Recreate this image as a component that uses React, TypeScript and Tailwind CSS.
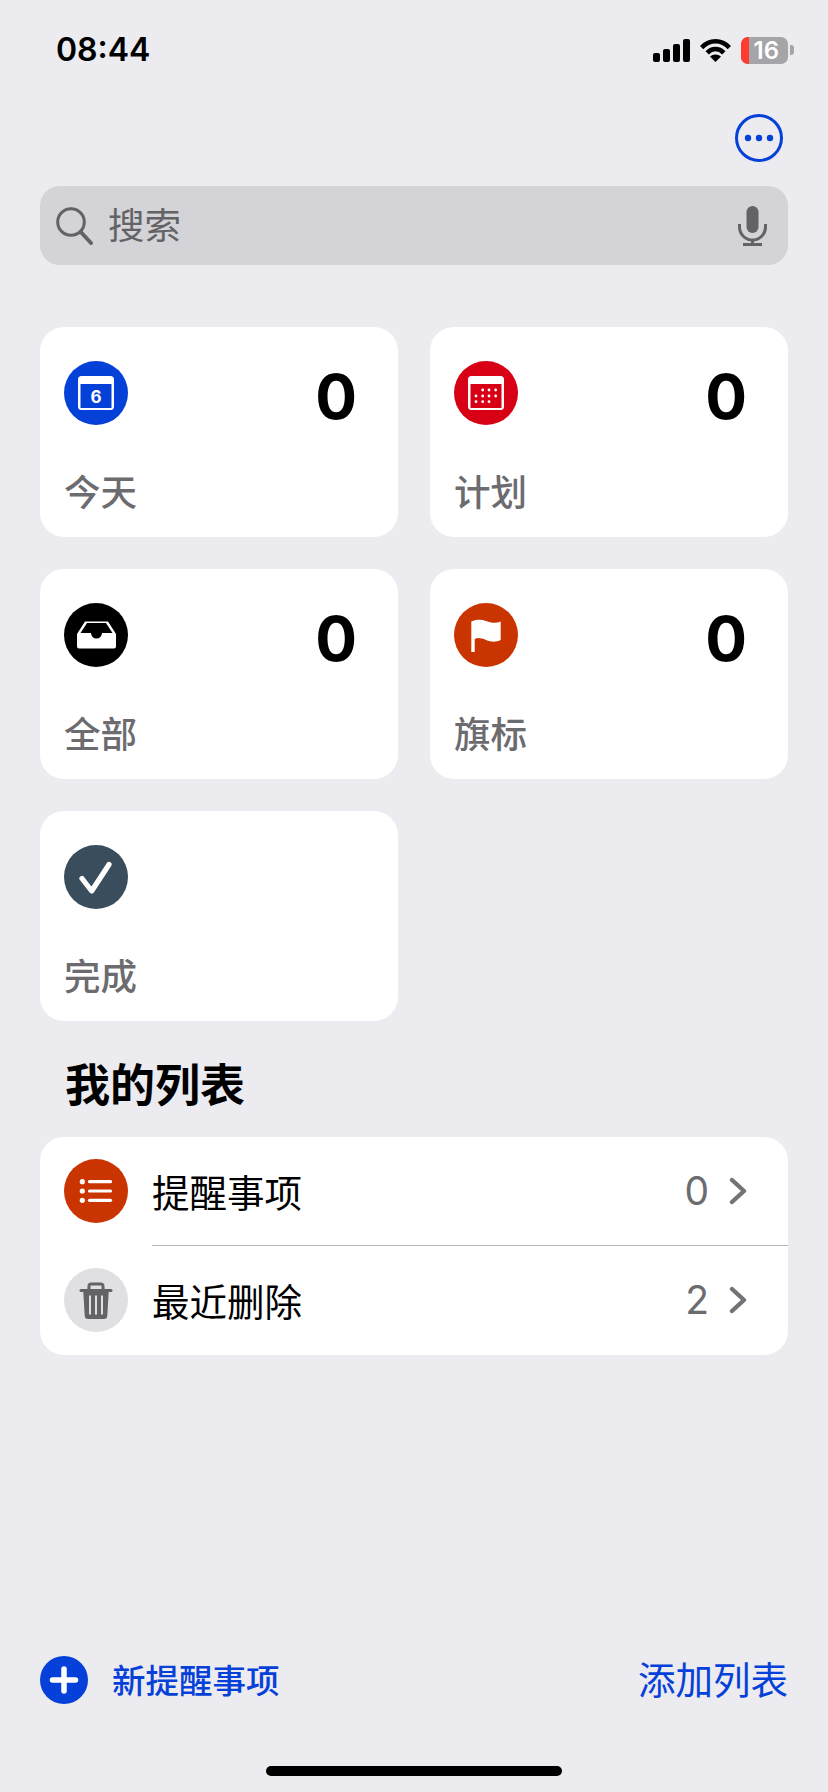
const cjk = "font-['Noto_Sans_CJK_SC','Noto_Sans',sans-serif]";

function StatusIcons() {
  return (
    <div className="flex items-center">
      {/* signal */}
      <svg width="37" height="23" viewBox="0 0 37 23" fill="#000">
        <rect x="0" y="14" width="7" height="9" rx="2" />
        <rect x="10" y="10" width="7" height="13" rx="2" />
        <rect x="20" y="5" width="7" height="18" rx="2" />
        <rect x="30" y="0" width="7" height="23" rx="2" />
      </svg>
      {/* wifi */}
      <svg className="ml-[10px]" width="31" height="24" viewBox="0 0 31 24" fill="none" stroke="#000" strokeWidth="4.6">
        <path d="M1.6 9.6C9.4 1.2 21.6 1.2 29.4 9.6" />
        <path d="M7.2 14.8C12 9.8 19 9.8 23.8 14.8" />
        <path d="M15.5 24L10 18.6C13 15.8 18 15.8 21 18.6Z" fill="#000" stroke="none" />
      </svg>
      {/* battery */}
      <div className="ml-[10px] flex items-center">
        <div className="relative w-[47px] h-[27px] rounded-[7px] bg-[#a5a5a9] flex items-center justify-end pr-[9px]">
          <div className="absolute left-0 top-0 bottom-0 w-[8px] rounded-l-[7px] bg-[#ff3b30]" />
          <span className="font-['Inter',sans-serif] font-semibold text-[24px] leading-[27px] text-white">16</span>
        </div>
        <div className="w-[4px] h-[10px] ml-[2px] rounded-r-[3px] bg-[#a5a5a9]" />
      </div>
    </div>
  );
}

function TodayIcon() {
  return (
    <svg width="64" height="64" viewBox="0 0 64 64">
      <circle cx="32" cy="32" r="32" fill="#0540d8" />
      <path fillRule="evenodd" fill="#fff" d="M17.5 15h29a3.5 3.5 0 0 1 3.5 3.5v27a3.5 3.5 0 0 1-3.5 3.5h-29a3.5 3.5 0 0 1-3.5-3.5v-27a3.5 3.5 0 0 1 3.5-3.5zM16.5 23v24h31v-24z" />
      <text x="32" y="41.5" textAnchor="middle" fontSize="17" fontWeight="700" fill="#fff" fontFamily="Inter, sans-serif">6</text>
    </svg>
  );
}

function ScheduledIcon() {
  const dots = [
    [28.7, 29], [35, 29], [41.7, 29],
    [22, 35], [28.7, 35], [35, 35], [41.7, 35],
    [22, 40.7], [28.7, 40.7], [35, 40.7],
  ];
  return (
    <svg width="64" height="64" viewBox="0 0 64 64">
      <circle cx="32" cy="32" r="32" fill="#d70015" />
      <path fillRule="evenodd" fill="#fff" d="M17.5 15h29a3.5 3.5 0 0 1 3.5 3.5v27a3.5 3.5 0 0 1-3.5 3.5h-29a3.5 3.5 0 0 1-3.5-3.5v-27a3.5 3.5 0 0 1 3.5-3.5zM16.5 23v24h31v-24z" />
      {dots.map(([x, y]) => (
        <circle key={`${x}-${y}`} cx={x} cy={y} r="1.4" fill="#fff" />
      ))}
    </svg>
  );
}

function AllIcon() {
  return (
    <svg width="64" height="64" viewBox="0 0 64 64">
      <circle cx="32" cy="32" r="32" fill="#000" />
      <path fillRule="evenodd" fill="#fff" d="M13 31L21 18.5H44L52 31V43.5a2 2 0 0 1-2 2H15a2 2 0 0 1-2-2ZM16.5 30L23 20H42L48.5 30H38a5.5 5.5 0 0 1-11 0Z" />
    </svg>
  );
}

function FlagIcon() {
  return (
    <svg width="64" height="64" viewBox="0 0 64 64">
      <circle cx="32" cy="32" r="32" fill="#c93400" />
      <path fill="#fff" d="M17.3 18.5C22 16.2 27 16 32 18S42 20.6 46.7 18.5V37C42 39.4 37 39 32 37S24 34.4 20.7 36V49H17.3Z" />
    </svg>
  );
}

function DoneIcon() {
  return (
    <svg width="64" height="64" viewBox="0 0 64 64">
      <circle cx="32" cy="32" r="32" fill="#3a4d5c" />
      <path d="M18 33.5L27.7 46L45 19.5" fill="none" stroke="#fff" strokeWidth="5.2" strokeLinecap="round" strokeLinejoin="round" />
    </svg>
  );
}

function ListIcon() {
  return (
    <svg width="64" height="64" viewBox="0 0 64 64">
      <circle cx="32" cy="32" r="32" fill="#c93400" />
      {[22.7, 32, 41.3].map((y) => (
        <g key={y}>
          <circle cx="18.3" cy={y} r="2.6" fill="#fff" />
          <path d={`M25.5 ${y}H46.5`} stroke="#fff" strokeWidth="3.2" strokeLinecap="round" />
        </g>
      ))}
    </svg>
  );
}

function TrashIcon() {
  return (
    <svg width="64" height="64" viewBox="0 0 64 64">
      <circle cx="32" cy="32" r="32" fill="#e0e0e3" />
      <path fillRule="evenodd" fill="#636366" d="M19.3 24H44.7L43.3 47.5a3.5 3.5 0 0 1-3.5 3.5H24.2a3.5 3.5 0 0 1-3.5-3.5ZM25 27.5V46.5H27V27.5ZM31 27.5V46.5H33V27.5ZM37 27.5V46.5H39V27.5Z" />
      <path d="M17 22.4H47" stroke="#636366" strokeWidth="3" strokeLinecap="round" />
      <path d="M25 22V18.2a2.2 2.2 0 0 1 2.2-2.2h9.6a2.2 2.2 0 0 1 2.2 2.2V22" fill="none" stroke="#636366" strokeWidth="3" />
    </svg>
  );
}

function Chevron() {
  return (
    <svg width="18" height="28" viewBox="0 0 18 28" fill="none" stroke="#737378" strokeWidth="4.4" strokeLinecap="round" strokeLinejoin="round">
      <path d="M3 3L15 14L3 25" />
    </svg>
  );
}

function Card({ icon, count, label }: { icon: React.ReactNode; count?: string; label: string }) {
  return (
    <div className="h-[210px] bg-white rounded-[24px] flex flex-col pl-[24px] pr-[41px] pt-[34px] pb-[28px]">
      <div className="flex justify-between items-start">
        {icon}
        {count && (
          <span className="mt-[4px] font-['Inter',sans-serif] font-bold text-[62px] leading-[64px] text-black">{count}</span>
        )}
      </div>
      <div className={`mt-auto text-[36.5px] leading-[36px] font-medium text-[#6c6c70] ${cjk}`}>{label}</div>
    </div>
  );
}

function Row({ icon, label, count }: { icon: React.ReactNode; label: string; count: string }) {
  return (
    <div className="flex items-center h-[108px] pl-[24px]">
      {icon}
      <div className={`ml-[24px] text-[37.5px] leading-[40px] text-black ${cjk}`}>{label}</div>
      <div className="ml-auto flex items-center pr-[41px]">
        <span className="font-['Inter',sans-serif] text-[39px] leading-[40px] text-[#6c6c70]">{count}</span>
        <span className="ml-[20px] flex"><Chevron /></span>
      </div>
    </div>
  );
}

export default function App() {
  return (
    <div className="w-[828px] h-[1792px] bg-[#ebebf0] flex flex-col overflow-hidden">
      {/* Status bar */}
      <div className="h-[64px] pt-[36px] pl-[56px] pr-[34px] flex items-center justify-between">
        <span className="font-['Inter',sans-serif] font-semibold text-[32px] leading-[28px] text-black">08:44</span>
        <StatusIcons />
      </div>

      {/* More button */}
      <div className="mt-[50px] flex justify-end pr-[45px]">
        <svg width="48" height="48" viewBox="0 0 48 48">
          <circle cx="24" cy="24" r="22.5" fill="none" stroke="#0540d8" strokeWidth="3" />
          <circle cx="13" cy="24" r="3.2" fill="#0540d8" />
          <circle cx="24" cy="24" r="3.2" fill="#0540d8" />
          <circle cx="35" cy="24" r="3.2" fill="#0540d8" />
        </svg>
      </div>

      {/* Search */}
      <div className="mt-[24px] mx-[40px] h-[79px] rounded-[20px] bg-[#d3d3d8] flex items-center pl-[16px] pr-[21px]">
        <svg width="37" height="38" viewBox="0 0 37 38" fill="none" stroke="#636366">
          <circle cx="15" cy="15" r="13.3" strokeWidth="3" />
          <path d="M24.8 25L35 36" strokeWidth="4" strokeLinecap="round" />
        </svg>
        <span className={`ml-[15px] mb-[4px] text-[36.5px] leading-[40px] text-[#636366] ${cjk}`}>搜索</span>
        <svg className="ml-auto" width="29" height="40" viewBox="0 0 29 40" fill="none" stroke="#636366" strokeWidth="3">
          <rect x="8.5" y="0" width="12" height="27" rx="6" fill="#636366" stroke="none" />
          <path d="M1.5 18v3a13 13 0 0 0 26 0v-3" />
          <path d="M14.5 34v5M5 38.5H24" />
        </svg>
      </div>

      {/* Smart lists */}
      <div className="mt-[62px] mx-[40px] grid grid-cols-2 gap-[32px]">
        <Card icon={<TodayIcon />} count="0" label="今天" />
        <Card icon={<ScheduledIcon />} count="0" label="计划" />
        <Card icon={<AllIcon />} count="0" label="全部" />
        <Card icon={<FlagIcon />} count="0" label="旗标" />
        <Card icon={<DoneIcon />} label="完成" />
      </div>

      {/* My lists */}
      <div className={`mt-[37px] pl-[65px] text-[45px] leading-[50px] font-bold text-black ${cjk}`}>我的列表</div>
      <div className="mt-[29px] mx-[40px] bg-white rounded-[24px] flex flex-col h-[218px]">
        <Row icon={<ListIcon />} label="提醒事项" count="0" />
        <div className="ml-[112px] h-[1px] bg-[#b5b5b8]" />
        <Row icon={<TrashIcon />} label="最近删除" count="2" />
      </div>

      {/* Bottom toolbar */}
      <div className="mt-auto mx-[40px] flex items-center justify-between">
        <div className="flex items-center">
          <svg width="48" height="48" viewBox="0 0 48 48">
            <circle cx="24" cy="24" r="24" fill="#0540d8" />
            <path d="M24 13V35M12.5 24H35.5" stroke="#fff" strokeWidth="5.5" strokeLinecap="round" />
          </svg>
          <span className={`ml-[24px] mb-[3px] text-[33.5px] leading-[40px] font-medium text-[#0540d8] ${cjk}`}>新提醒事项</span>
        </div>
        <span className={`mb-[4px] text-[37.5px] leading-[40px] text-[#0540d8] ${cjk}`}>添加列表</span>
      </div>

      {/* Home indicator */}
      <div className="mt-[62px] mb-[16px] mx-auto w-[296px] h-[10px] rounded-full bg-black" />
    </div>
  );
}
